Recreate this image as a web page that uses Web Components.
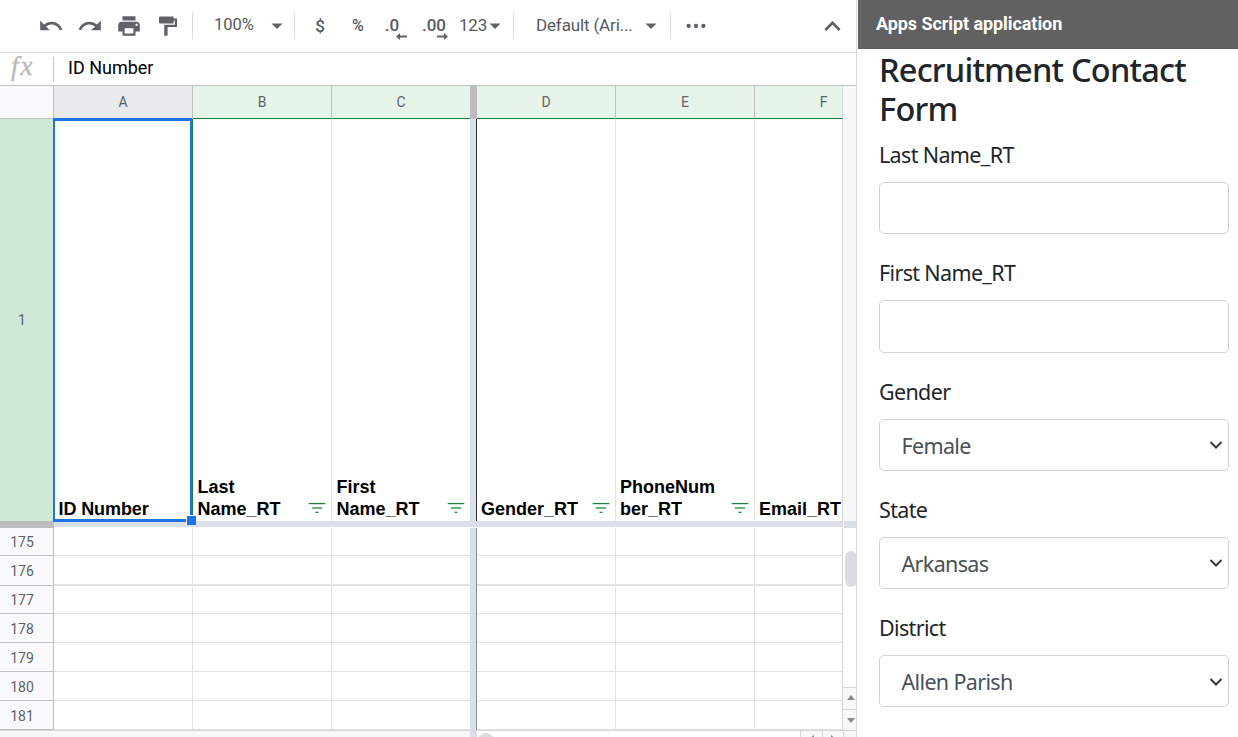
<!DOCTYPE html>
<html lang="en">
<head>
<meta charset="utf-8">
<title>Recruitment Contact Form</title>
<style>
  body {
    margin: 0;
    width: 1238px;
    height: 737px;
    overflow: hidden;
    display: grid;
    grid-template-columns: 858px 1fr;
    background: #fff;
    font-family: Roboto, "Liberation Sans", sans-serif;
  }
  main {
    display: grid;
    grid-template-rows: 53px 32px 1fr;
    width: 856px;
    height: 737px;
    overflow: hidden;
    border-right: 1px solid #d5d7da;
  }
</style>
</head>
<body>
  <main>
    <sheet-toolbar></sheet-toolbar>
    <formula-bar>ID Number</formula-bar>
    <sheet-grid></sheet-grid>
  </main>
  <script-sidebar heading="Apps Script application">
    <h1 slot="title">Recruitment Contact<br>Form</h1>
    <form-field label="Last Name_RT"></form-field>
    <form-field label="First Name_RT"></form-field>
    <form-field label="Gender" value="Female"></form-field>
    <form-field label="State" value="Arkansas"></form-field>
    <form-field label="District" value="Allen Parish"></form-field>
  </script-sidebar>

<script>
const ICONS = {
  undo: [26, `<path d="M12.5 8c-2.65 0-5.05.99-6.9 2.6L2 7v9h9l-3.62-3.62c1.39-1.16 3.16-1.88 5.12-1.88 3.54 0 6.55 2.31 7.6 5.5l2.37-.78C21.08 11.03 17.15 8 12.5 8z"/>`],
  redo: [26, `<path d="M18.4 10.6C16.55 8.99 14.15 8 11.5 8c-4.65 0-8.58 3.03-9.96 7.22L3.9 16c1.05-3.19 4.05-5.5 7.6-5.5 1.95 0 3.73.72 5.12 1.88L13 16h9V7l-3.6 3.6z"/>`],
  print: [26, `<path d="M19 8H5c-1.66 0-3 1.34-3 3v6h4v4h12v-4h4v-6c0-1.66-1.34-3-3-3zm-3 11H8v-5h8v5zm3-7c-.55 0-1-.45-1-1s.45-1 1-1 1 .45 1 1-.45 1-1 1zm-1-9H6v4h12V3z"/>`],
  paint: [24, `<path d="M17.700 4.500v-.7c0-.8-.5-1.300-1.300-1.300H4.300c-.8 0-1.300.5-1.300 1.300v4.400c0 .8.500 1.300 1.300 1.300h12.100c.8 0 1.300-.5 1.300-1.300V6.700h1.200v4.100H8.200V21c0 .5.300.8.800.8h1.800c.5 0 .8-.3.800-.8v-8H21V4.500z"/>`],
  caret: [24, `<path d="M6.500 9.500h11l-5.500 5.500z"/>`],
  dots: [24, `<circle cx="4.600" cy="12" r="2.150"/><circle cx="12" cy="12" r="2.150"/><circle cx="19.400" cy="12" r="2.150"/>`],
  up: [27, `<path d="M12 8l-7.200 7.200 1.700 1.700 5.500-5.500 5.500 5.500 1.700-1.700z"/>`],
  filter: [20, `<g fill="none" stroke="#188038" stroke-width="1.500"><path d="M2 6.700h20"/><path d="M5.800 12h12.400"/><path d="M10.200 17.200h3.600"/></g>`],
};

class SheetIcon extends HTMLElement {
  constructor() {
    super();
    this.attachShadow({ mode: "open" });
  }

  connectedCallback() {
    const [size, shape] = ICONS[this.getAttribute("name")];
    this.shadowRoot.innerHTML = `
      <style>
        :host { display: inline-flex; flex: none; }
        svg { display: block; fill: #5f6368; }
      </style>
      <svg width="${size}" height="${size}" viewBox="0 0 24 24">${shape}</svg>
    `;
  }
}

class SheetToolbar extends HTMLElement {
  constructor() {
    super();
    this.attachShadow({ mode: "open" }).innerHTML = `
      <style>
        :host {
          display: flex;
          align-items: center;
          box-sizing: border-box;
          height: 53px;
          padding: 0 4px 1px 31px;
          border-bottom: 1px solid #dadce0;
          font: 500 17px Roboto, sans-serif;
          color: #565a5f;
        }
        .tool {
          width: 39px;
          display: flex;
          align-items: center;
          justify-content: center;
        }
        .text { width: 38px; }
        hr {
          flex: none;
          width: 1px;
          height: 27px;
          margin: 0;
          border: 0;
          background: #dadce0;
        }
        .picker {
          display: flex;
          align-items: center;
          box-sizing: border-box;
        }
        .picker span { flex: 1; font-weight: 400; margin-top: -1px; }
        .zoom { width: 101px; padding: 0 5px 0 21px; }
        .zoom span { margin-top: -3px; font-size: 16.500px; }
        .formats { width: 60px; padding-left: 6px; }
        .formats span { flex: none; width: 24px; letter-spacing: -.2px; }
        .font { width: 156px; padding: 0 7px 0 22px; }
        .font span { letter-spacing: -.15px; }
        .decimal {
          display: grid;
          justify-items: end;
          font-size: 17px;
          line-height: 15px;
        }
        .decimal svg { margin: 0 -8px 0 0; fill: #5f6368; }
        .spacer { flex: 1; }
      </style>
      <div class="tool"><sheet-icon name="undo"></sheet-icon></div>
      <div class="tool"><sheet-icon name="redo"></sheet-icon></div>
      <div class="tool"><sheet-icon name="print"></sheet-icon></div>
      <div class="tool"><sheet-icon name="paint"></sheet-icon></div>
      <hr style="margin-left: 5px">
      <div class="picker zoom"><span>100%</span><sheet-icon name="caret"></sheet-icon></div>
      <hr>
      <div class="tool text" style="margin-left: 6px">$</div>
      <div class="tool text" style="font-size: 16px">%</div>
      <div class="tool text">
        <div class="decimal" style="margin: 6px 8px 0 0">.0<svg width="11" height="7" viewBox="0 0 11 7"><path d="M0 3.500L4 0v2.500h7v2H4V7z"/></svg></div>
      </div>
      <div class="tool text">
        <div class="decimal" style="margin-top: 6px">.00<svg style="margin-right: -2px" width="11" height="7" viewBox="0 0 11 7"><path d="M11 3.500L7 0v2.500H0v2h7V7z"/></svg></div>
      </div>
      <div class="picker formats"><span>123</span><sheet-icon name="caret"></sheet-icon></div>
      <hr>
      <div class="picker font"><span>Default (Ari...</span><sheet-icon name="caret"></sheet-icon></div>
      <hr>
      <div class="tool" style="margin-left: 5px"><sheet-icon name="dots"></sheet-icon></div>
      <div class="spacer"></div>
      <div class="tool"><sheet-icon name="up"></sheet-icon></div>
    `;
  }
}

class FormulaBar extends HTMLElement {
  constructor() {
    super();
    this.attachShadow({ mode: "open" }).innerHTML = `
      <style>
        :host {
          display: flex;
          align-items: center;
          height: 32px;
          font: 18px/30px Roboto, sans-serif;
          color: #000;
        }
        i {
          box-sizing: border-box;
          width: 54px;
          height: 24px;
          padding-left: 11px;
          border-right: 1px solid #c8c8c8;
          font: italic 27px/18px "Liberation Serif", serif;
          letter-spacing: 2px;
          color: #b8b8b8;
          -webkit-text-stroke: .3px #b8b8b8;
        }
        div { padding: 0 0 2px 14px; }
      </style>
      <i>fx</i>
      <div><slot></slot></div>
    `;
  }
}

class SheetCell extends HTMLElement {
  constructor() {
    super();
    this.attachShadow({ mode: "open" }).innerHTML = `
      <style>
        :host {
          display: flex;
          align-items: flex-end;
          justify-content: space-between;
          box-sizing: border-box;
          min-width: 0;
          overflow: hidden;
          border: 0 solid #e1e1e1;
          border-width: 0 1px 1px 0;
          background: #fff;
          color: #000;
          font: bold 18px/22px "Liberation Sans", Arial, sans-serif;
        }
        :host([head]) {
          align-items: center;
          justify-content: center;
          border-color: #c0c0c0 #c0c0c0 #188038;
          background: #e6f4ea;
          color: #5f6368;
          font: 14px Roboto, sans-serif;
        }
        :host([side]) {
          align-items: center;
          justify-content: center;
          padding: 2px 9px 0 0;
          border-color: #c0c0c0;
          background: #f8f9fa;
          color: #5f6368;
          font: 14px Roboto, sans-serif;
        }
        :host([field]) { padding: 0 4px 1px; border-bottom: 0; }
        sheet-icon { margin: 0 0 2px; }
      </style>
      <slot></slot>
    `;
  }

  connectedCallback() {
    if (this.hasAttribute("filter")) {
      this.shadowRoot.innerHTML += `<sheet-icon name="filter"></sheet-icon>`;
    }
  }
}

class SheetGrid extends HTMLElement {
  constructor() {
    super();
    this.attachShadow({ mode: "open" });
  }

  connectedCallback() {
    this.shadowRoot.innerHTML = `
      <style>
        :host {
          display: grid;
          grid-template-columns: 843px 13px;
          grid-template-rows: 644px 7px;
          box-sizing: border-box;
          border-top: 1px solid #c0c0c0;
          overflow: hidden;
        }
        .cells {
          position: relative;
          display: grid;
          grid-template-columns: 54px 139px 139px 138px 7px 139px 139px 88px;
          grid-template-rows: 33px 402px 7px 28px 30px 28px repeat(4, 29px);
          height: 644px;
          overflow: hidden;
        }
        .corner { border-bottom-color: #c0c0c0; }
        .picked { background: #e8eaed; border-bottom-color: #c0c0c0; }
        .thick { border-bottom-width: 2px; }
        .raised { padding-top: 0; }
        .c { border-right: 0; }
        .f { border-right-color: #d5d7da; }
        .f[head] { padding-left: 50px; }
        .f[field] { white-space: nowrap; padding-right: 0; }
        .nudge { padding-left: 4.500px; }
        .id { padding-left: 4.500px; letter-spacing: -.1px; }
        .first { background: #ceead6; padding-top: 0; border-bottom: 0; }
        .vbar { background: #dadfe8; border-right: 1px solid #333; }
        .vbar.low { border-right-color: #8a8e93; }
        .vbar.top { background: #bdbdbd; border: 0; }
        .hbar {
          grid-column: 2 / -1;
          height: 6px;
          background: #dadfe8;
          border-right: 1px solid #d5d7da;
        }
        .hbar.left { grid-column: 1; height: 7px; border: 0; background: #bdbdbd; }
        .range {
          position: absolute;
          left: 53px;
          top: 32px;
          width: 139px;
          height: 404px;
          box-sizing: border-box;
          border: solid #1a73e8;
          border-width: 3px 2px;
        }
        .handle {
          position: absolute;
          left: 186px;
          top: 429px;
          width: 9px;
          height: 9px;
          border: solid #fff;
          border-width: 1px 0 0 1px;
          background: #1a73e8;
        }
        .edge {
          position: absolute;
          left: 192px;
          top: 33px;
          width: 1px;
          height: 398px;
          background: #188038;
        }
        .vscroll {
          display: grid;
          grid-template-rows: 435px 7px 159px 22px 21px;
          background: #fff;
        }
        .idle { background: #f8f8f8; }
        .gap { background: #dadfe8; }
        .vscroll .gap { margin-left: 1px; }
        .track { padding: 23px 0 0 2px; }
        .thumb { width: 12px; height: 36px; border-radius: 6px; background: #dadce0; }
        .step {
          display: grid;
          place-items: center;
          padding-left: 2px;
          background: #f8f8f8;
          border-top: 1px solid #d5d7da;
        }
        .step svg { fill: #8a8a8a; }
        .up { padding-bottom: 3px; }
        .hscroll {
          grid-column: 1 / -1;
          display: grid;
          grid-template-columns: 470px 7px 323px 22px 21px 13px;
          border-top: 1px solid #d5d7da;
          height: 7px;
          overflow: hidden;
        }
        .hscroll .thumb { width: 16px; height: 16px; border-radius: 8px; margin: 2px 0 0 1px; }
        .hscroll .step {
          place-items: start center;
          padding: 4px 0 0;
          border: 0;
          border-left: 1px solid #d5d7da;
        }
      </style>
      <div class="cells">
        ${this.headRow()}
        ${this.fieldRow()}
        <div class="hbar left"></div><div class="hbar"></div>
        ${[175, 176, 177, 178, 179, 180, 181].map((n) => this.emptyRow(n)).join("")}
        <div class="edge"></div>
        <div class="range"></div>
        <div class="handle"></div>
      </div>
      <div class="vscroll">
        <div class="idle"></div>
        <div class="gap"></div>
        <div class="track"><div class="thumb"></div></div>
        <div class="step up"><svg width="8" height="5"><path d="M0 5l4-5 4 5z"/></svg></div>
        <div class="step"><svg width="8" height="5"><path d="M0 0l4 5 4-5z"/></svg></div>
      </div>
      <div class="hscroll">
        <div class="idle"></div>
        <div class="gap"></div>
        <div><div class="thumb"></div></div>
        <div class="step"><svg width="5" height="8"><path d="M5 0L0 4l5 4z"/></svg></div>
        <div class="step"><svg width="5" height="8"><path d="M0 0l5 4-5 4z"/></svg></div>
        <div class="step"></div>
      </div>
    `;
  }

  headRow() {
    return `
      <sheet-cell head class="corner" style="background: #f8f9fa"></sheet-cell>
      <sheet-cell head class="picked">A</sheet-cell>
      <sheet-cell head>B</sheet-cell>
      <sheet-cell head class="c">C</sheet-cell>
      <div class="vbar top"></div>
      <sheet-cell head>D</sheet-cell>
      <sheet-cell head>E</sheet-cell>
      <sheet-cell head class="f">F</sheet-cell>
    `;
  }

  fieldRow() {
    return `
      <sheet-cell side class="first">1</sheet-cell>
      <sheet-cell field class="id">ID Number</sheet-cell>
      <sheet-cell field filter class="nudge"><span>Last<br>Name_RT</span></sheet-cell>
      <sheet-cell field filter class="nudge c"><span>First<br>Name_RT</span></sheet-cell>
      <div class="vbar"></div>
      <sheet-cell field filter><span>Gender_RT</span></sheet-cell>
      <sheet-cell field filter><span>PhoneNum<br>ber_RT</span></sheet-cell>
      <sheet-cell field class="f">Email_RT</sheet-cell>
    `;
  }

  emptyRow(n) {
    const thick = n === 176 ? "thick" : "";
    const raised = n < 178 ? "raised" : "";
    return `
      <sheet-cell side class="${raised}">${n}</sheet-cell>
      <sheet-cell class="${thick}"></sheet-cell>
      <sheet-cell class="${thick}"></sheet-cell>
      <sheet-cell class="c ${thick}"></sheet-cell>
      <div class="vbar low"></div>
      <sheet-cell class="${thick}"></sheet-cell>
      <sheet-cell class="${thick}"></sheet-cell>
      <sheet-cell class="f ${thick}"></sheet-cell>
    `;
  }
}

class ScriptSidebar extends HTMLElement {
  constructor() {
    super();
    this.attachShadow({ mode: "open" });
  }

  connectedCallback() {
    this.shadowRoot.innerHTML = `
      <style>
        :host { display: block; color: #212529; }
        header {
          box-sizing: border-box;
          height: 49px;
          padding-left: 18px;
          background: #616161;
          color: #fff;
          font: bold 18px/47px Roboto, sans-serif;
          letter-spacing: -.07px;
        }
        section { padding: 1px 9px 0 21px; }
        ::slotted(h1) {
          margin: 0 0 13px;
          font: 500 32.500px/39px "Noto Sans", "Open Sans", sans-serif;
          letter-spacing: -.770px;
          white-space: nowrap;
        }
      </style>
      <header>${this.getAttribute("heading")}</header>
      <section>
        <slot name="title"></slot>
        <slot></slot>
      </section>
    `;
  }
}

class FormField extends HTMLElement {
  constructor() {
    super();
    this.attachShadow({ mode: "open" });
  }

  connectedCallback() {
    const value = this.getAttribute("value");
    this.shadowRoot.innerHTML = `
      <style>
        :host {
          display: block;
          height: 118.250px;
          font: 400 21.500px/28px "Noto Sans", "Open Sans", sans-serif;
          letter-spacing: -.65px;
        }
        label { display: block; height: 41px; }
        .control {
          display: flex;
          align-items: center;
          justify-content: space-between;
          box-sizing: border-box;
          height: 52.250px;
          padding: 2px 5px 0 21.500px;
          border: 1px solid #ced4da;
          border-radius: 5px;
          color: #495057;
        }
        svg { fill: none; stroke: #343a40; stroke-width: 2; margin-top: -1px; }
      </style>
      <label>${this.getAttribute("label")}</label>
      <div class="control">
        ${value ? `<span>${value}</span><svg width="14" height="10" viewBox="0 0 14 10"><path d="M1.500 2l5.500 5.500L12.500 2"/></svg>` : ""}
      </div>
    `;
  }
}

customElements.define("sheet-icon", SheetIcon);
customElements.define("sheet-toolbar", SheetToolbar);
customElements.define("formula-bar", FormulaBar);
customElements.define("sheet-cell", SheetCell);
customElements.define("sheet-grid", SheetGrid);
customElements.define("script-sidebar", ScriptSidebar);
customElements.define("form-field", FormField);
</script>
</body>
</html>
